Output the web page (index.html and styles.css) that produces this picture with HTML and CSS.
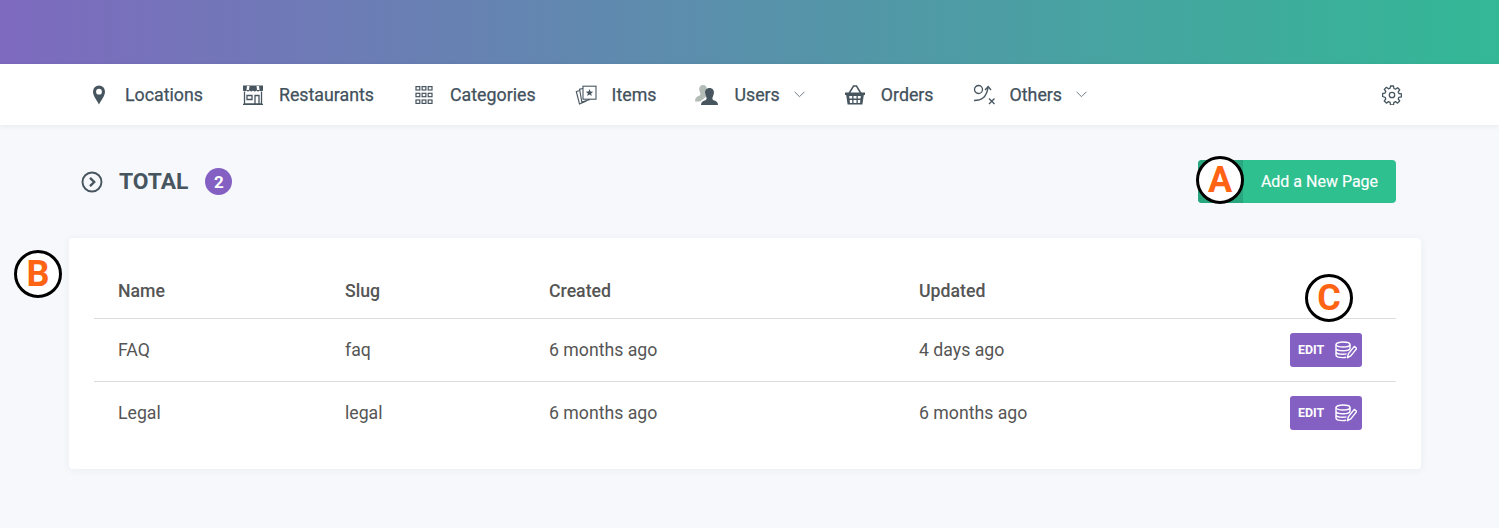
FILE: index.html
```html
<!DOCTYPE html>
<html lang="en">
<head>
<meta charset="utf-8">
<title>Pages</title>
<link rel="stylesheet" href="styles.css">
</head>
<body>
<header class="banner"></header>
<nav class="nav">
  <ul class="menu">
    <li class="menu-item"><svg class="ico" viewBox="0 0 22 22"><path fill="#47555f" fill-rule="evenodd" d="M11 1.500a6 6 0 0 0-6 6.200c0 4.200 4.200 9.100 6 12.800 1.800-3.700 6-8.600 6-12.800a6 6 0 0 0-6-6.200zm0 3.300a2.900 2.900 0 1 1 0 5.800 2.900 2.900 0 0 1 0-5.800z"/></svg><span>Locations</span></li>
    <li class="menu-item"><svg class="ico" viewBox="0 0 22 22"><path fill="#47555f" d="M1 1.500h20v5q-1.700 2-3.300 0-1.700 2-3.300 0-1.700 2-3.400 0-1.700 2-3.300 0-1.700 2-3.400 0Q2.700 8.500 1 6.500z"/><path fill="#fff" d="M5 2h2.500L7 6H4.500zM14.500 2H17l.5 4H15z"/><path fill="none" stroke="#47555f" stroke-width="1.300" d="M2.500 8v12h17V8M1 20.400h20M5 11.500h5v4H5zM13 20v-8.500h4V20"/></svg><span>Restaurants</span></li>
    <li class="menu-item"><svg class="ico" viewBox="0 0 22 22"><g fill="none" stroke="#47555f" stroke-width="1.200"><rect x="3" y="2.600" width="3.800" height="3.400"/><rect x="9.100" y="2.600" width="3.800" height="3.400"/><rect x="15.200" y="2.600" width="3.800" height="3.400"/><rect x="3" y="9.300" width="3.800" height="3.400"/><rect x="9.100" y="9.300" width="3.800" height="3.400"/><rect x="15.200" y="9.300" width="3.800" height="3.400"/><rect x="3" y="16" width="3.800" height="3.400"/><rect x="9.100" y="16" width="3.800" height="3.400"/><rect x="15.200" y="16" width="3.800" height="3.400"/></g></svg><span>Categories</span></li>
    <li class="menu-item"><svg class="ico" viewBox="0 0 22 22"><g fill="none" stroke="#47555f" stroke-width="1.100"><rect x="8" y="2.200" width="13" height="13"/><path d="M8 4.500 4.600 5.200 6.800 18l8.200-2.500M4.600 6.500 1.300 7.500 4.500 20l7-3"/></g><path fill="#47555f" d="m14.500 5 1 2.600 2.700.1-2.100 1.700.7 2.700-2.300-1.500-2.300 1.500.7-2.700-2.100-1.700 2.700-.1z"/></svg><span>Items</span></li>
    <li class="menu-item"><svg class="ico ico-wide" viewBox="0 0 25 22"><path fill="#b4bcb8" d="M9 1c2.600 0 4 2 3.800 4.200-.2 2.200-1.300 3.800-1.300 4.800 0 1 .5 1.600 1.500 2L6 17.500H1c0-3.500 1.500-4.700 4-5.700 1-.4 1.500-1 1.500-1.800 0-1-1.300-2.600-1.300-4.800C5.200 3 6.600 1 9 1z"/><path fill="#47555f" d="M15.500 4c3 0 4.600 2.300 4.400 4.800-.2 2.500-1.500 4.200-1.500 5.400 0 1.200.7 1.800 2 2.300 2.500 1 3.600 2 3.600 4.500H7c0-2.500 1.100-3.500 3.600-4.500 1.300-.5 2-1.100 2-2.300 0-1.200-1.300-2.900-1.500-5.400C10.900 6.300 12.500 4 15.500 4z"/></svg><span>Users</span><svg class="chev" viewBox="0 0 11 7"><path fill="none" stroke="#6f7c85" d="m.6.8 4.900 4.900L10.400.8"/></svg></li>
    <li class="menu-item"><svg class="ico" viewBox="0 0 22 22"><path fill="none" stroke="#47555f" stroke-width="1.500" d="M5 9.500 9.500 2h3L17 9.500"/><path fill="#47555f" fill-rule="evenodd" d="M1 8.500h20V11h-1.200l-1.400 9.500H3.600L2.200 11H1zM5.200 12l.3 2.500h2.700V12zm4.300 0v2.500h3V12zm4.300 0v2.500h2.700l.3-2.500zM5.700 16l.3 3h2.200v-3zm3.800 0v3h3v-3zm4.300 0v3H16l.3-3z"/></svg><span>Orders</span></li>
    <li class="menu-item"><svg class="ico" viewBox="0 0 22 22"><g fill="none" stroke="#47555f" stroke-width="1.300"><circle cx="5.500" cy="5.500" r="4"/><path d="M1 16.500c8 0 12-3 14-12.500M12 6l3.200-3.500L18 6M16 14.500l5.500 5.500M21.500 14.500 16 20"/></g></svg><span>Others</span><svg class="chev" viewBox="0 0 11 7"><path fill="none" stroke="#6f7c85" d="m.6.8 4.900 4.900L10.400.8"/></svg></li>
  </ul>
  <svg class="gear" viewBox="0 0 20 20"><g fill="none" stroke="#47555f" stroke-width="1.300"><path d="M8.500 1h3l.4 2.500 1.600.7 2.100-1.500 2.100 2.100-1.500 2.100.7 1.600 2.500.4v3l-2.500.4-.7 1.600 1.500 2.100-2.100 2.100-2.100-1.500-1.600.7-.4 2.500h-3l-.4-2.500-1.600-.7-2.100 1.500-2.100-2.100 1.500-2.100-.7-1.600L.6 11.500v-3l2.500-.4.700-1.600-1.500-2.100 2.100-2.100 2.100 1.500 1.600-.7z" stroke-linejoin="round"/><circle cx="10" cy="10" r="2.700"/></g></svg>
</nav>
<main class="page">
  <div class="head">
    <div class="title">
      <svg class="title-ico" viewBox="0 0 22 22"><circle cx="11" cy="11" r="9.500" fill="none" stroke="#47555f" stroke-width="1.900"/><path d="m9 6.800 4.200 4.200L9 15.200" fill="none" stroke="#47555f" stroke-width="2.400"/></svg>
      <h1>TOTAL</h1>
      <span class="count">2</span>
    </div>
    <a class="add-btn"><span class="add-icon"></span><span class="add-label">Add a New Page</span></a>
  </div>
  <section class="card">
    <table class="table">
      <thead>
        <tr><th class="c1">Name</th><th class="c2">Slug</th><th class="c3">Created</th><th class="c4">Updated</th><th></th></tr>
      </thead>
      <tbody>
        <tr><td>FAQ</td><td>faq</td><td>6 months ago</td><td>4 days ago</td><td class="act"><a class="edit">EDIT<svg viewBox="0 0 22 18"><g fill="none" stroke="#fff" stroke-width="1.400"><ellipse cx="8" cy="3.500" rx="7" ry="2.500"/><path d="M1 3.500V14c0 1.400 3 2.600 7 2.600 1.200 0 2.200-.1 3.200-.3M1 7.200c0 1.400 3 2.500 7 2.500s7-1.100 7-2.500M1 10.800c0 1.400 3 2.500 7 2.500 1.300 0 2.400-.1 3.500-.4M15 3.500v4"/><path d="m12.500 16.700.8-3.800 6-7.500 2.500 2-6 7.500z" stroke-linejoin="round"/></g></svg></a></td></tr>
        <tr><td>Legal</td><td>legal</td><td>6 months ago</td><td>6 months ago</td><td class="act"><a class="edit">EDIT<svg viewBox="0 0 22 18"><g fill="none" stroke="#fff" stroke-width="1.400"><ellipse cx="8" cy="3.500" rx="7" ry="2.500"/><path d="M1 3.500V14c0 1.400 3 2.600 7 2.600 1.200 0 2.200-.1 3.200-.3M1 7.200c0 1.400 3 2.500 7 2.500s7-1.100 7-2.500M1 10.800c0 1.400 3 2.500 7 2.500 1.300 0 2.400-.1 3.500-.4M15 3.500v4"/><path d="m12.500 16.700.8-3.800 6-7.500 2.500 2-6 7.500z" stroke-linejoin="round"/></g></svg></a></td></tr>
      </tbody>
    </table>
  </section>
</main>
<span class="mark mark-a">A</span>
<span class="mark mark-b">B</span>
<span class="mark mark-c">C</span>
</body>
</html>
```
FILE: styles.css
```css
* { box-sizing: border-box; }
html, body { margin: 0; height: 100%; }
body {
  position: relative;
  height: 528px;
  overflow: hidden;
  background: #f7f8fc;
  font-family: Roboto, "Liberation Sans", sans-serif;
  color: #47555f;
}
.banner {
  height: 64px;
  background: linear-gradient(90deg, #7e6abf 0%, #33b896 100%);
}
.nav {
  height: 61px;
  background: #fff;
  box-shadow: 0 1px 6px rgba(40, 50, 70, .08);
  display: flex;
  align-items: center;
  justify-content: space-between;
  padding: 0 97px 0 88px;
}
.menu {
  display: flex;
  align-items: center;
  gap: 39px;
  list-style: none;
  margin: 0;
  padding: 0;
}
.menu-item {
  display: flex;
  align-items: center;
  font-size: 17.8px;
  font-weight: 400;
  line-height: 22px;
  color: #42515c;
  -webkit-text-stroke: .25px #42515c;
}
.ico { width: 22px; height: 22px; margin-right: 15px; flex: none; }
.ico-wide { width: 25px; margin-right: 15px; margin-left: -1px; }
.chev { width: 11px; height: 7px; margin-left: 14px; }
.gear { width: 20px; height: 20px; }
.page { padding: 0 78px 0 69px; }
.head {
  display: flex;
  align-items: center;
  justify-content: space-between;
  height: 113px;
  padding: 0 25px 0 12px;
}
.title { display: flex; align-items: center; }
.title-ico { width: 22px; height: 22px; margin-right: 16px; }
.title h1 { margin: 0; font-size: 22.8px; font-weight: 700; color: #47555f; line-height: 28px; }
.count {
  width: 27px;
  height: 27px;
  margin-left: 17px;
  border-radius: 50%;
  background: #8560c3;
  color: #fff;
  font-size: 17px;
  font-weight: 700;
  display: flex;
  align-items: center;
  justify-content: center;
}
.add-btn {
  display: flex;
  align-items: stretch;
  width: 198px;
  height: 43px;
  border-radius: 4px;
  overflow: hidden;
  background: #2ec08f;
  color: #fff;
  font-size: 16px;
  -webkit-text-stroke: .15px #fff;
}
.add-icon { width: 45px; background: #2aa77e; }
.add-label { flex: 1; display: flex; align-items: center; justify-content: center; }
.card {
  background: #fff;
  border-radius: 4px;
  box-shadow: 0 1px 8px rgba(40, 50, 70, .06);
  padding: 24px 25px 23px;
  height: 231px;
}
.table {
  width: 100%;
  border-collapse: collapse;
  table-layout: fixed;
  font-size: 17.7px;
  color: #555;
}
.c1 { width: 227px; }
.c2 { width: 204px; }
.c3 { width: 370px; }
.c4 { width: 353px; }
.table th {
  height: 56px;
  padding: 2px 0 0 24px;
  text-align: left;
  font-weight: 500;
  border-bottom: 1px solid #dcdcdc;
  color: #555;
}
.table td {
  height: 63px;
  padding: 0 0 0 24px;
  border-bottom: 1px solid #dcdcdc;
}
.table tbody tr:last-child td { border-bottom: 0; }
.table td.act { padding: 0 34px 0 0; text-align: right; }
.edit {
  display: inline-flex;
  align-items: center;
  justify-content: space-between;
  vertical-align: middle;
  width: 72px;
  height: 34px;
  padding: 0 5px 1px 8px;
  border-radius: 3px;
  background: #8560c3;
  color: #fff;
  font-size: 12.4px;
  font-weight: 700;
}
.edit svg { width: 22px; height: 18px; margin-top: 2px; }
.mark {
  position: absolute;
  width: 48px;
  height: 48px;
  border: 3px solid #000;
  border-radius: 50%;
  background: #fff;
  color: #ff6414;
  font-size: 36px;
  font-weight: 700;
  line-height: 42px;
  text-align: center;
}
.mark-a { left: 1196px; top: 156px; }
.mark-b { left: 14px; top: 250px; }
.mark-c { left: 1305px; top: 274px; }
```
